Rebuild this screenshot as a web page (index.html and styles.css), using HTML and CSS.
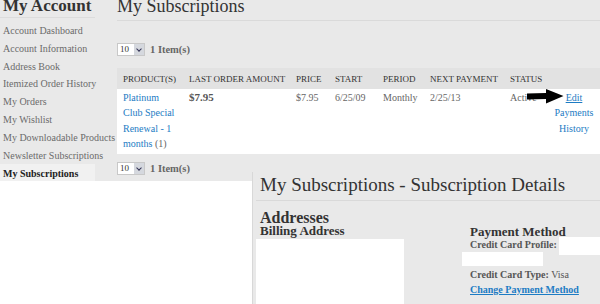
FILE: index.html
```html
<!DOCTYPE html>
<html lang="en">
<head>
  <meta charset="UTF-8">
  <title>My Subscriptions</title>
  <meta name="viewport" content="width=device-width, initial-scale=1.0">
  <link rel="stylesheet" href="styles.css">
</head>
<body>
  <div class="top">
    <aside class="sidebar">
      <h2>My Account</h2>
      <ul>
        <li><a href="#">Account Dashboard</a></li>
        <li><a href="#">Account Information</a></li>
        <li><a href="#">Address Book</a></li>
        <li><a href="#">Itemized Order History</a></li>
        <li><a href="#">My Orders</a></li>
        <li><a href="#">My Wishlist</a></li>
        <li><a href="#">My Downloadable Products</a></li>
        <li><a href="#">Newsletter Subscriptions</a></li>
        <li class="active"><strong>My Subscriptions</strong></li>
      </ul>
    </aside>

    <main class="content">
      <h1>My Subscriptions</h1>

      <div class="pager first">
        <span class="limiter">10<span class="drop"></span></span>
        <span class="count">1 Item(s)</span>
      </div>

      <div class="table-wrap">
        <table class="subs">
          <colgroup>
            <col style="width:66px">
            <col style="width:107px">
            <col style="width:39px">
            <col style="width:48px">
            <col style="width:47px">
            <col style="width:80px">
            <col style="width:44px">
            <col style="width:52px">
          </colgroup>
          <thead>
            <tr>
              <th>Product(s)</th>
              <th>Last Order Amount</th>
              <th>Price</th>
              <th>Start</th>
              <th>Period</th>
              <th>Next Payment</th>
              <th>Status</th>
              <th></th>
            </tr>
          </thead>
          <tbody>
            <tr>
              <td><a href="#">Platinum Club Special Renewal - 1 months</a>&nbsp;(1)</td>
              <td class="amount">$7.95</td>
              <td>$7.95</td>
              <td>6/25/09</td>
              <td>Monthly</td>
              <td>2/25/13</td>
              <td>Active</td>
              <td class="actions">
                <a href="#" class="edit">Edit</a><br>
                <a href="#">Payments</a><br>
                <a href="#">History</a>
              </td>
            </tr>
          </tbody>
        </table>
        <svg class="arrow" width="37" height="15" viewBox="0 0 37 15">
          <path d="M0 4.5 L19 4 L19 0 L36.5 7 L19 14.5 L19 10 L0 10.5 Z" fill="#000"/>
        </svg>
      </div>

      <div class="pager">
        <span class="limiter">10<span class="drop"></span></span>
        <span class="count">1 Item(s)</span>
      </div>
    </main>
  </div>

  <div class="lower">
    <div class="blank"></div>
    <section class="details">
      <h1>My Subscriptions - Subscription Details</h1>
      <div class="details-body">
        <div class="addresses">
          <h3>Addresses</h3>
          <h4>Billing Address</h4>
          <div class="address-box"></div>
        </div>
        <div class="payment">
          <h4>Payment Method</h4>
          <div class="profile">
            <strong>Credit Card Profile:</strong>
            <span class="mask mask-a"></span>
          </div>
          <span class="mask mask-b"></span>
          <p><strong>Credit Card Type:</strong> Visa</p>
          <p><a href="#" class="change">Change Payment Method</a></p>
        </div>
      </div>
    </section>
  </div>
</body>
</html>
```

FILE: styles.css
```css
html, body {
  margin: 0;
  padding: 0;
}
body {
  width: 600px;
  height: 304px;
  overflow: hidden;
  background-color: #e9e9e9;
  font-family: "Liberation Serif", "DejaVu Serif", serif;
  font-size: 10px;
  color: #555;
}
a {
  color: #1d7cc4;
  text-decoration: none;
}

/* top part */
.top {
  display: flex;
  height: 181px;
}
.sidebar {
  width: 95px;
  flex: none;
}
.sidebar h2 {
  margin: -3px 0 0;
  padding: 0 0 3px 3px;
  font-size: 17px;
  line-height: 17px;
  color: #333;
  border-bottom: 1px solid #dcdcdc;
  white-space: nowrap;
}
.sidebar ul {
  list-style: none;
  margin: 0;
  padding: 0;
}
.sidebar li {
  height: 17.8px;
  line-height: 17.8px;
  padding-left: 3px;
  font-size: 10px;
  white-space: nowrap;
}
.sidebar li:first-child {
  margin-top: 4px;
}
.sidebar li a {
  color: #6b6b6b;
}
.sidebar li.active {
  background-color: #f1f1f1;
  color: #222;
  height: 20px;
  line-height: 20px;
}

.content {
  flex: 1;
  margin-left: 22px;
}
.content h1 {
  margin: -3px 0 0;
  padding-bottom: 4px;
  font-size: 18px;
  line-height: 19px;
  font-weight: normal;
  color: #333;
  border-bottom: 1px solid #dadada;
}

.pager {
  display: flex;
  align-items: center;
  gap: 5px;
  height: 12px;
}
.pager.first {
  margin: 22px 0 13px;
}
.limiter {
  display: flex;
  align-items: center;
  justify-content: space-between;
  width: 24px;
  height: 11px;
  padding-left: 2px;
  background: #fff;
  border: 1px solid #c8c8c8;
  font-size: 9px;
  color: #333;
}
.drop {
  width: 10px;
  height: 11px;
  background: #d5d8de;
  position: relative;
}
.drop::after {
  content: "";
  position: absolute;
  left: 3px;
  top: 3px;
  width: 3px;
  height: 3px;
  border-right: 1.5px solid #335;
  border-bottom: 1.5px solid #335;
  transform: rotate(45deg);
}
.count {
  font-size: 10.5px;
  font-weight: bold;
  color: #666;
}

.table-wrap {
  position: relative;
  margin-bottom: 8px;
}
.subs {
  width: 483px;
  table-layout: fixed;
  border-collapse: collapse;
}
.subs th {
  height: 21px;
  padding: 0 6px;
  background-color: #e2e2e2;
  text-align: left;
  font-size: 9px;
  font-weight: normal;
  text-transform: uppercase;
  color: #333;
  white-space: nowrap;
}
.subs td {
  padding: 1px 6px 3px;
  background-color: #fff;
  vertical-align: top;
  line-height: 15.3px;
  font-size: 10px;
  color: #666;
}
.subs td.amount {
  font-weight: bold;
  font-size: 11px;
  color: #555;
}
.subs td.actions {
  padding: 1px 0 3px;
  text-align: center;
  white-space: nowrap;
}
.subs .edit {
  text-decoration: underline;
}
.arrow {
  position: absolute;
  left: 410px;
  top: 21px;
}

/* lower part */
.lower {
  display: flex;
  height: 123px;
}
.blank {
  width: 253px;
  flex: none;
  background: #fff;
}
.details {
  flex: 1;
  margin-top: -9px;
  background-color: #e9e9e9;
  box-shadow: -1px 0 0 #d8d8d8;
}
.details h1 {
  margin: 0 0 0 3px;
  padding: 3px 0 5px 4px;
  font-size: 19px;
  line-height: 20px;
  font-weight: normal;
  color: #333;
  border-bottom: 1px solid #d9d9d9;
}
.details-body {
  display: flex;
}
.addresses {
  width: 214px;
  flex: none;
}
.addresses h3 {
  margin: 9px 0 0 7px;
  font-size: 16px;
  line-height: 15px;
  color: #333;
}
.addresses h4 {
  margin: 0 0 0 7px;
  font-size: 13px;
  line-height: 12px;
  color: #333;
}
.address-box {
  width: 148px;
  height: 70px;
  margin: 2px 0 0 3px;
  background: #fff;
}
.payment {
  flex: 1;
}
.payment h4 {
  margin: 24px 0 0 3px;
  font-size: 13px;
  line-height: 14px;
  color: #333;
}
.profile {
  display: flex;
  align-items: flex-start;
  gap: 2px;
  margin-left: 3px;
  height: 13px;
}
.profile strong {
  line-height: 12px;
}
.mask {
  display: block;
  background: #fff;
}
.mask-a {
  width: 41px;
  height: 18px;
  margin-top: -2px;
}
.mask-b {
  width: 81px;
  height: 14px;
  margin-left: -5px;
}
.payment p {
  margin: 2px 0 0 3px;
  line-height: 14px;
  color: #555;
}
.payment p + p {
  margin-top: 1px;
}
.payment strong {
  color: #555;
}
.change {
  font-weight: bold;
  text-decoration: underline;
}
```
